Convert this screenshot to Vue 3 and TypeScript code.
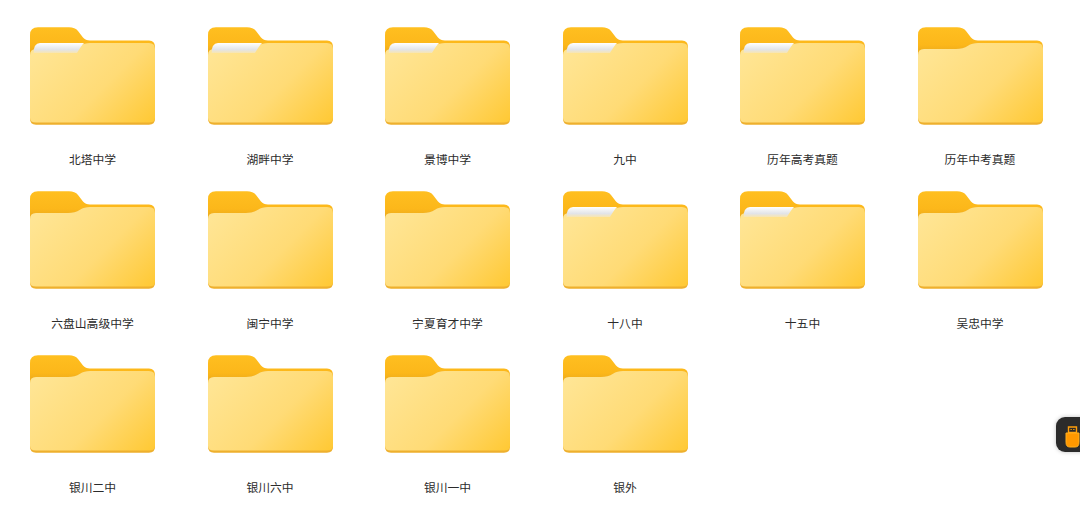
<script setup lang="ts">
interface FolderItem {
  name: string;
  hasPaper: boolean;
}

const folders: FolderItem[] = [
  { name: "北塔中学", hasPaper: true },
  { name: "湖畔中学", hasPaper: true },
  { name: "景博中学", hasPaper: true },
  { name: "九中", hasPaper: true },
  { name: "历年高考真题", hasPaper: true },
  { name: "历年中考真题", hasPaper: false },
  { name: "六盘山高级中学", hasPaper: false },
  { name: "闽宁中学", hasPaper: false },
  { name: "宁夏育才中学", hasPaper: false },
  { name: "十八中", hasPaper: true },
  { name: "十五中", hasPaper: true },
  { name: "吴忠中学", hasPaper: false },
  { name: "银川二中", hasPaper: false },
  { name: "银川六中", hasPaper: false },
  { name: "银川一中", hasPaper: false },
  { name: "银外", hasPaper: false },
];
</script>

<template>
  <div class="page">
    <svg width="0" height="0" class="defs">
      <defs>
        <linearGradient id="front" gradientUnits="userSpaceOnUse" x1="14" y1="16" x2="108" y2="110">
          <stop offset="0" stop-color="#ffe594" />
          <stop offset="0.55" stop-color="#ffdb76" />
          <stop offset="1" stop-color="#ffc935" />
        </linearGradient>
        <linearGradient id="tab" gradientUnits="userSpaceOnUse" x1="0" y1="0" x2="0" y2="24">
          <stop offset="0" stop-color="#ffbf20" />
          <stop offset="0.75" stop-color="#fcb71a" />
          <stop offset="1" stop-color="#efad1c" />
        </linearGradient>
        <linearGradient id="paper" x1="0" y1="0" x2="0" y2="1">
          <stop offset="0" stop-color="#ffffff" />
          <stop offset="0.6" stop-color="#e2e4e8" />
          <stop offset="1" stop-color="#ffe6a0" />
        </linearGradient>
      </defs>
    </svg>
    <div class="grid">
      <div v-for="item in folders" :key="item.name" class="item">
        <svg class="folder" width="125" height="99" viewBox="0 0 125 99">
          <path
            d="M0 32V8Q0 0.300 8 0.300H39Q45 0.300 48 4L53 10.500Q55.500 13.500 60 13.500H119Q125 13.500 125 20V50H0Z"
            fill="url(#tab)"
          />
          <path
            d="M0 92V28Q0 22 6 22H38Q45 22 50 18.800Q54 16 60 16H119Q125 16 125 22V92Q125 97.700 119 97.700H6Q0 97.700 0 92Z"
            fill="#eeb02e"
          />
          <path
            d="M0 91V28Q0 22 6 22H38Q45 22 50 18.800Q54 16 60 16H119Q125 16 125 22V91Q125 95.500 119 95.500H6Q0 95.500 0 91Z"
            fill="url(#front)"
          />
          <path
            v-if="item.hasPaper"
            d="M3.500 27Q3.500 16 10 16H54Q51 19 47 26H4Z"
            fill="url(#paper)"
          />
        </svg>
        <div class="label">{{ item.name }}</div>
      </div>
    </div>
    <div class="float-btn">
      <svg width="15" height="22" viewBox="0 0 15 22" fill="none">
        <path d="M3.500 1H11.500V6.500H3.500Z" stroke="#ff9f0a" stroke-width="1.400" />
        <path d="M5.500 3.500H6.800M8.200 3.500H9.500" stroke="#ff9f0a" />
        <path
          d="M1 7H14V16.500Q14 21 10 21H5Q1 21 1 16.500Z"
          fill="#ff9800"
          stroke="#ffb020"
        />
      </svg>
    </div>
  </div>
</template>

<style scoped>
.page {
  position: relative;
  width: 1080px;
  height: 515px;
  overflow: hidden;
  background: #fff;
  font-family: "Noto Sans CJK SC", "Liberation Sans", sans-serif;
}

.defs {
  display: block;
  position: absolute;
}

.grid {
  display: grid;
  grid-template-columns: repeat(6, 177.5px);
  grid-auto-rows: 164px;
  padding: 27px 0 0 3.75px;
}

.item {
  display: flex;
  flex-direction: column;
  align-items: center;
}

.folder {
  display: block;
  flex: none;
}

.label {
  margin-top: 24px;
  font-size: 11.800px;
  line-height: 18px;
  color: #2b2b2b;
}

.float-btn {
  position: absolute;
  left: 1056px;
  top: 417px;
  width: 44px;
  height: 35px;
  display: flex;
  align-items: flex-start;
  padding: 9px 0 0 9px;
  box-sizing: border-box;
  background: #2b2b2b;
  border-radius: 9px;
  box-shadow: 0 0 4px rgba(0, 0, 0, 0.25);
}
</style>
